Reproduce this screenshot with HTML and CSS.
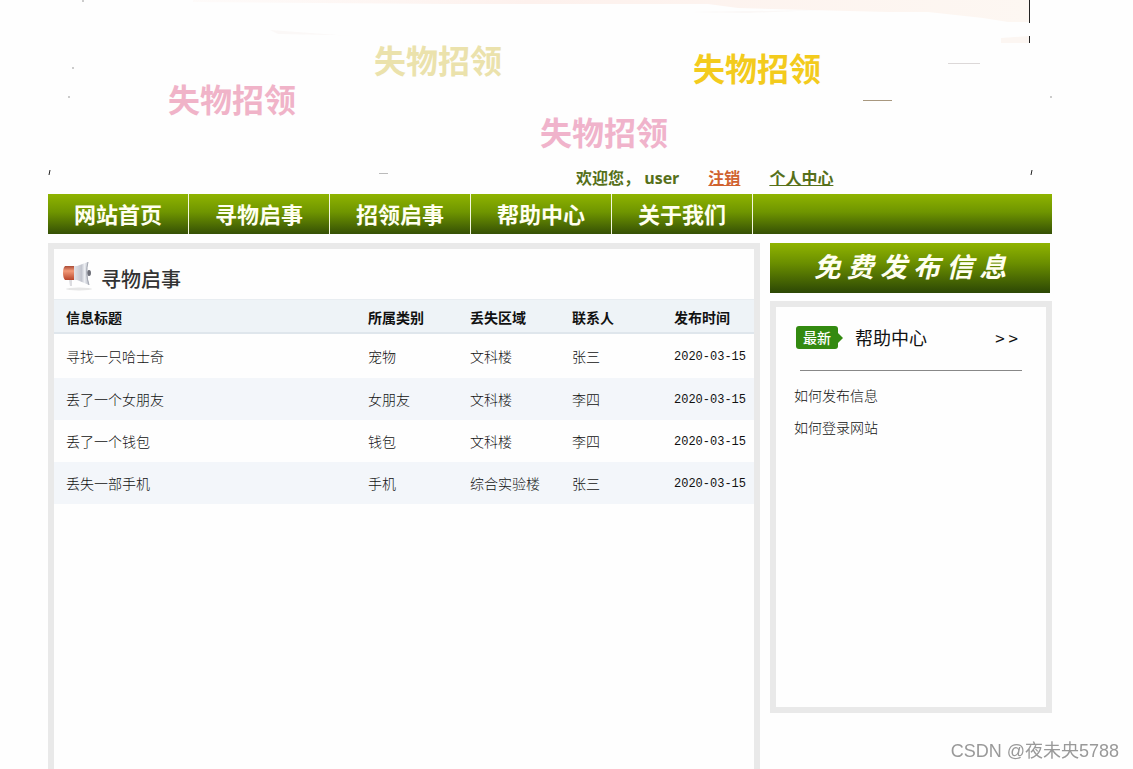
FILE: index.html
```
<!DOCTYPE html>
<html lang="zh-CN">
<head>
  <meta charset="utf-8">
  <title>失物招领</title>
  <link rel="stylesheet" href="styles.css">
</head>
<body>
  <div class="container">
    <header class="header">
      <svg class="header-bg" viewBox="0 0 1004 194" preserveAspectRatio="none" aria-hidden="true">
        <defs>
          <linearGradient id="haze" x1="0" x2="1" y1="0" y2="0">
            <stop offset="0" stop-color="#fdf3ef" stop-opacity="0.3"/>
            <stop offset="0.4" stop-color="#fdf1ed"/>
            <stop offset="1" stop-color="#fdf7f2"/>
          </linearGradient>
        </defs>
        <path d="M145 0H981V22H960L935 18L880 12H840L690 8L660 4L400 4L145 2Z" fill="url(#haze)"/>
        <path d="M953 38L981 36V43H953Z" fill="#fcf6f2"/>
        <path d="M640 12L775 10L700 13ZM222 30L290 35L390 37L230 34ZM250 64L272 56" fill="#fbf8f7"/>
        <path d="M981.5 0V23M981.5 36V43" stroke="#222" stroke-width="1"/>
        <path d="M900 63.500H932" stroke="#dcd8d8" stroke-width="1"/>
        <path d="M815 100.500H844" stroke="#a8987f" stroke-width="1"/>
        <path d="M331 173.500H340" stroke="#bbb" stroke-width="1"/>
        <path d="M1 175L2 170M983 175L984 170" stroke="#222" stroke-width="1"/>
        <path d="M24 68H26M21 96V98M1003 96V98M35 0V2" stroke="#999" stroke-width="1"/>
      </svg>
      <span class="word word-1">失物招领</span>
      <span class="word word-2">失物招领</span>
      <span class="word word-3">失物招领</span>
      <span class="word word-4">失物招领</span>
      <div class="user-bar">
        <span>欢迎您， user</span>
        <a class="logout" href="#">注销</a>
        <a href="#">个人中心</a>
      </div>
    </header>

    <nav class="nav">
      <a href="#">网站首页</a>
      <a href="#">寻物启事</a>
      <a href="#">招领启事</a>
      <a href="#">帮助中心</a>
      <a href="#">关于我们</a>
    </nav>

    <div class="content">
      <main class="panel list">
        <div class="list-title">
          <svg width="32" height="32" viewBox="0 0 32 32" aria-hidden="true">
            <defs>
              <linearGradient id="red" x1="0" x2="0" y1="0" y2="1">
                <stop offset="0" stop-color="#a94a35"/>
                <stop offset="0.35" stop-color="#f39a78"/>
                <stop offset="1" stop-color="#b8452b"/>
              </linearGradient>
              <linearGradient id="horn" x1="0" x2="1" y1="0" y2="0">
                <stop offset="0" stop-color="#e2e2e8"/>
                <stop offset="0.5" stop-color="#c3c6cf"/>
                <stop offset="0.7" stop-color="#eceef2"/>
                <stop offset="1" stop-color="#b4b8c2"/>
              </linearGradient>
            </defs>
            <ellipse cx="17" cy="29" rx="13" ry="1.500" fill="#e6e6e6"/>
            <path d="M7 20H10V26H8Z" fill="#dcdce0"/>
            <path d="M3 6H13V20H3Q1 18 1 13T3 6Z" fill="url(#red)"/>
            <ellipse cx="27" cy="13" rx="2" ry="3" fill="#6d6f78"/>
            <path d="M12 6H15L26 2Q24 13 27 25L15 20H12Z" fill="url(#horn)"/>
            <path d="M26 2Q23 13 27 25" fill="none" stroke="#a3a7b1"/>
          </svg>
          <h1>寻物启事</h1>
        </div>
        <table>
          <thead>
            <tr>
              <th>信息标题</th>
              <th class="col">所属类别</th>
              <th class="col">丢失区域</th>
              <th class="col">联系人</th>
              <th class="col-date">发布时间</th>
            </tr>
          </thead>
          <tbody>
            <tr>
              <td>寻找一只哈士奇</td>
              <td>宠物</td>
              <td>文科楼</td>
              <td>张三</td>
              <td class="date">2020-03-15</td>
            </tr>
            <tr>
              <td>丢了一个女朋友</td>
              <td>女朋友</td>
              <td>文科楼</td>
              <td>李四</td>
              <td class="date">2020-03-15</td>
            </tr>
            <tr>
              <td>丢了一个钱包</td>
              <td>钱包</td>
              <td>文科楼</td>
              <td>李四</td>
              <td class="date">2020-03-15</td>
            </tr>
            <tr>
              <td>丢失一部手机</td>
              <td>手机</td>
              <td>综合实验楼</td>
              <td>张三</td>
              <td class="date">2020-03-15</td>
            </tr>
          </tbody>
        </table>
      </main>

      <aside class="side">
        <button class="publish" type="button">免 费 发 布 信 息</button>
        <section class="panel help">
          <div class="help-title">
            <span class="tag">最新</span>
            <h2>帮助中心</h2>
            <a href="#">&gt; &gt;</a>
          </div>
          <ul>
            <li><a href="#">如何发布信息</a></li>
            <li><a href="#">如何登录网站</a></li>
          </ul>
        </section>
      </aside>
    </div>
  </div>
  <div class="watermark">CSDN @夜未央5788</div>
</body>
</html>
```
FILE: styles.css
```
* {
  box-sizing: border-box;
}
body {
  margin: 0;
  background-color: #fefefe;
  color: #111;
  font-family: "Noto Sans CJK SC", sans-serif;
  font-size: 14px;
}
a {
  color: inherit;
  text-decoration: none;
}
.container {
  display: flex;
  flex-direction: column;
  min-height: 100vh;
  padding: 0 81px 0 48px;
}

/* banner */
.header {
  position: relative;
  display: flex;
  align-items: flex-end;
  height: 194px;
}
.header-bg {
  position: absolute;
  top: 0;
  left: 0;
  width: 100%;
  height: 100%;
}
.word {
  position: absolute;
  font-size: 32px;
  font-weight: bold;
  line-height: 40px;
}
.word-1 {
  left: 120px;
  top: 78px;
  color: #f0b3c8;
}
.word-2 {
  left: 326px;
  top: 39px;
  color: #ebe2ac;
}
.word-3 {
  left: 645px;
  top: 47px;
  color: #f3cb1d;
}
.word-4 {
  left: 492px;
  top: 111px;
  color: #f0b3cb;
}
.user-bar {
  position: relative;
  display: flex;
  gap: 29px;
  margin-left: 528px;
  padding-bottom: 4px;
  color: #56701a;
  font-family: "Open Sans", "Noto Sans CJK SC", sans-serif;
  font-size: 16px;
  font-weight: bold;
  line-height: 24px;
}
.user-bar a {
  text-decoration: underline;
}
.user-bar .logout {
  color: #d0622f;
}

/* menu */
.nav {
  display: flex;
  height: 40px;
  background: linear-gradient(#8fb400, #6f9500 45%, #355005);
}
.nav a {
  padding: 0 26px;
  border-right: 1px solid #f4f8e0;
  color: #fffff0;
  font-size: 22px;
  font-weight: bold;
  line-height: 38px;
}

.content {
  display: flex;
  flex: 1;
  gap: 10px;
  padding-top: 9px;
}
.panel {
  border: 6px solid #e9e9e9;
}

/* list */
.list {
  flex: 1;
  border-bottom: none;
}
.list-title {
  display: flex;
  gap: 7px;
  height: 50px;
  padding: 11px 8px 0;
}
.list-title h1 {
  margin: 0;
  color: #333;
  font-size: 20px;
  font-weight: 500;
  line-height: 38px;
}
table {
  width: 100%;
  border-spacing: 0;
  table-layout: fixed;
}
.col {
  width: 102px;
}
.col-date {
  width: 92px;
}
th,
td {
  height: 42px;
  padding: 0 0 0 12px;
  text-align: left;
  white-space: nowrap;
}
th {
  height: 35px;
  padding-top: 2px;
  border-top: 1px solid #e8edf1;
  border-bottom: 2px solid #dfe6ec;
  background-color: #eef3f7;
  font-size: 14px;
}
td {
  font-weight: 300;
}
tbody tr:first-child td {
  height: 44px;
}
tbody tr:nth-child(even) {
  background-color: #f3f6fa;
}
.date {
  padding-top: 2px;
  font-family: "Liberation Mono", monospace;
  font-size: 12px;
}

/* side column */
.side {
  width: 282px;
}
.publish {
  display: block;
  width: 280px;
  height: 50px;
  margin-bottom: 8px;
  padding: 0 0 4px;
  border: none;
  background: linear-gradient(#90b400, #6b8f00 40%, #2c4705);
  color: #fffff0;
  font-family: "Noto Sans CJK SC", sans-serif;
  font-size: 27px;
  font-style: italic;
  font-weight: bold;
  line-height: 46px;
  cursor: pointer;
}
.help {
  min-height: 412px;
  padding: 16px 18px;
}
.help-title {
  display: flex;
  align-items: center;
  height: 48px;
  margin: 0 6px;
  padding: 0 4px 18px 0;
  border-bottom: 1px solid #888;
}
.tag {
  position: relative;
  width: 42px;
  margin-left: -4px;
  border-radius: 3px;
  background-color: #338a10;
  color: #fff;
  font-size: 14px;
  font-weight: 500;
  line-height: 23px;
  text-align: center;
}
.tag::after {
  content: "";
  position: absolute;
  left: 100%;
  top: 7px;
  border: 5px solid transparent;
  border-left-color: #338a10;
  border-right-width: 0;
}
.help h2 {
  flex: 1;
  margin: 0 0 2px 17px;
  font-size: 18px;
  font-weight: normal;
  line-height: 24px;
}
.help-title a {
  font-size: 17px;
}
.help ul {
  margin: 8px 0 0;
  padding: 0;
  list-style: none;
}
.help li {
  font-weight: 300;
  line-height: 32px;
}

.watermark {
  position: fixed;
  right: 14px;
  bottom: 6px;
  color: #999;
  font-family: "Liberation Sans", "Noto Sans CJK SC", sans-serif;
  font-size: 18px;
  line-height: 24px;
}
```
